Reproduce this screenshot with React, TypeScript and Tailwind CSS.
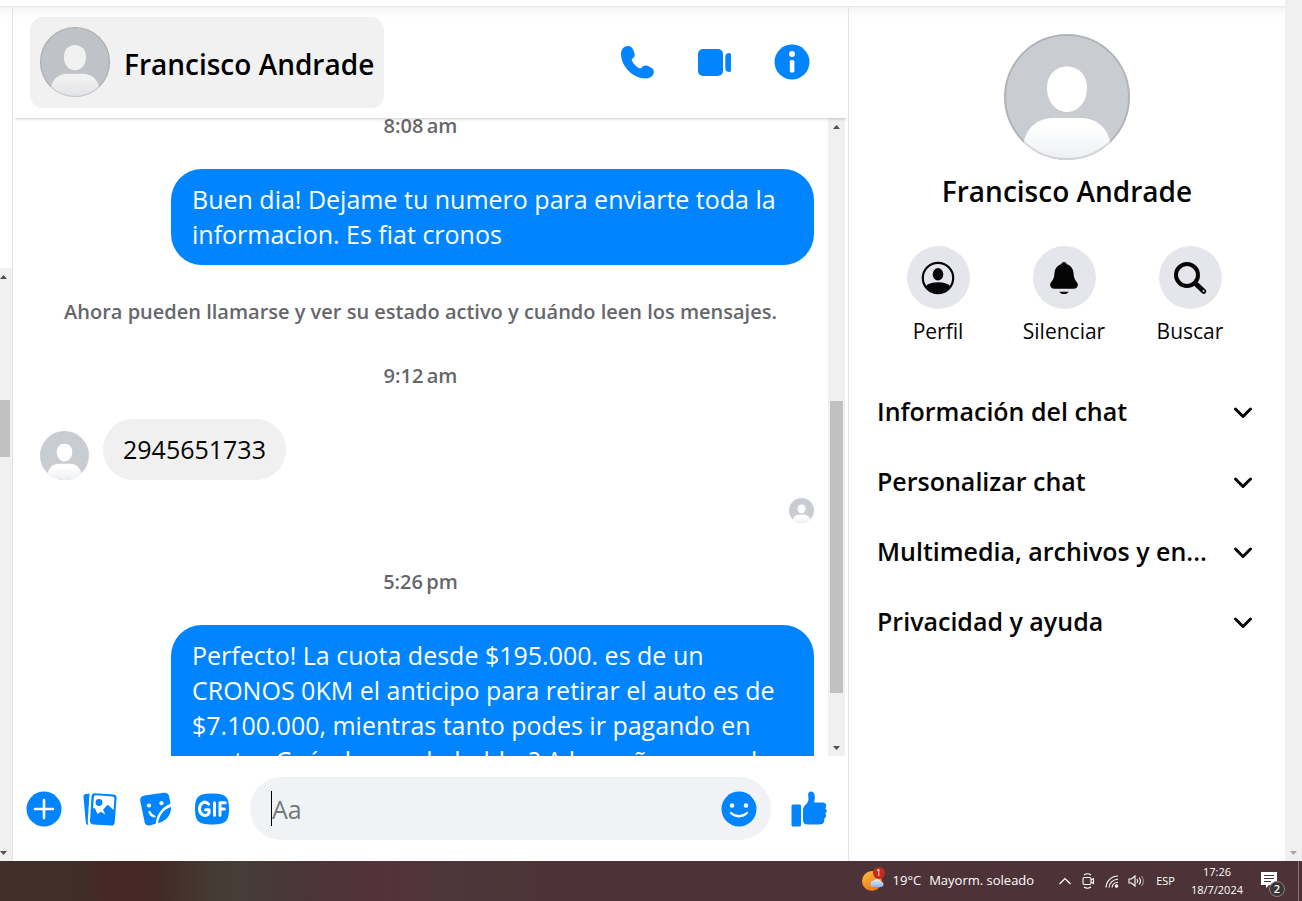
import React from 'react';

interface IconProps {
  className?: string;
}

const PhoneIcon: React.FC<IconProps> = ({ className }) => (
  <svg viewBox="0 0 36 36" className={className} fill="currentColor" aria-hidden="true">
    <path d="M1 10C1 5.500 4 2 8 2c3 0 4.500 1.800 5.500 4.500l1 2.700c.7 2 .1 3.900-1.700 5.100-1.300.9-1.300 1.600-.6 2.900 1.800 3.200 4 5.400 7.200 7 .9.500 1.600.3 2.200-.5 1.500-2 3.400-2.800 5.700-2 1.500.5 3 1.300 4.400 2.200 2.300 1.500 2.800 4 1.500 6.600C31.700 33 29 34.500 25.500 34.500 13 34.500 1 22 1 10z" />
  </svg>
);

const VideoIcon: React.FC<IconProps> = ({ className }) => (
  <svg viewBox="0 0 36 36" className={className} fill="currentColor" aria-hidden="true">
    <rect x="1" y="5" width="25" height="27" rx="5" />
    <path d="M28.300 12.500c0-2 1.800-3.500 3.900-3.500 1.100 0 1.800.6 1.800 1.800v15.400c0 1.200-.7 1.800-1.800 1.800-2.100 0-3.900-1.500-3.900-3.500z" />
  </svg>
);

const InfoIcon: React.FC<IconProps> = ({ className }) => (
  <svg viewBox="0 0 36 36" className={className} aria-hidden="true">
    <circle cx="18" cy="18" r="17.500" fill="currentColor" />
    <circle cx="18" cy="10" r="3" fill="#fff" />
    <rect x="15.800" y="16" width="4.600" height="12.500" rx="1.500" fill="#fff" />
  </svg>
);

const PlusIcon: React.FC<IconProps> = ({ className }) => (
  <svg viewBox="0 0 36 36" className={className} aria-hidden="true">
    <circle cx="18" cy="18" r="17.500" fill="currentColor" />
    <path d="M18 9v18M9 18h18" stroke="#fff" strokeWidth="2.600" strokeLinecap="round" />
  </svg>
);

const PhotosIcon: React.FC<IconProps> = ({ className }) => (
  <svg viewBox="0 0 36 36" className={className} aria-hidden="true">
    <path d="M1.500 6C1.300 4.300 2.200 3.200 4 3l3.500-.4L5.800 30c-.1 2 .2 3 .7 3.900C4.800 33.800 4 33 3.800 31.300z" fill="currentColor" />
    <path d="M13 2.200 31.500 3.500c2.200.2 3.300 1.500 3.100 3.500L32.700 31.500c-.2 2.200-1.500 3.300-3.500 3.100l-18-1.200c-2.200-.2-3.300-1.400-3.200-3.400L9.500 5.300c.2-2.200 1.500-3.200 3.500-3.100z" fill="currentColor" />
    <path d="M14 4.300 30.300 5.500c1.500.1 2.200.9 2.100 2.200l-.8 11.300-5.800-5.200-4.700 4.600 2.200 5.200-4.600-2.900-3.200 2.200-2.700-5.900-1.800.6.8-11.400c.1-1.300.9-2 2.200-1.900z" fill="#fff" />
    <circle cx="17" cy="11.500" r="3.400" fill="currentColor" />
  </svg>
);

const StickerIcon: React.FC<IconProps> = ({ className }) => (
  <svg viewBox="0 0 36 36" className={className} aria-hidden="true">
    <path d="M6.500 4.500 25.500 1.700c3-.4 5 .8 5.600 3.600l1.400 7.500C25 15.500 19 22.500 17.600 32.700l-5 1.600c-3.300.8-5.400-.3-6-3.300L2.300 10.300c-.6-3.300.9-5.300 4.200-5.800z" fill="currentColor" />
    <path d="M33 16c.4 8-4.700 14-13 16.200C21.200 24 26 18 33 16z" fill="currentColor" />
    <circle cx="11" cy="14.500" r="2.100" fill="#fff" />
    <circle cx="23.500" cy="12.200" r="2.100" fill="#fff" />
    <path d="M11.500 21c.9 2.400 2.700 4 5 4.500" stroke="#fff" strokeWidth="2.200" strokeLinecap="round" fill="none" />
  </svg>
);

const GifIcon: React.FC<IconProps> = ({ className }) => (
  <svg viewBox="0 0 36 36" className={className} aria-hidden="true">
    <path d="M18 2.500c13 0 17 3 17 15.500s-4 15.500-17 15.500S1 30.500 1 18 5 2.500 18 2.500z" fill="currentColor" />
    <g fill="none" stroke="#fff" strokeWidth="3" strokeLinecap="round" strokeLinejoin="round">
      <path d="M14.500 13.200C12.800 11 10.500 10.600 8.300 12c-3.600 2.400-3.800 9 0 11.600 2.600 1.700 5.600.9 6.800-1.700V18.700h-3.600" />
      <path d="M20.500 11.700v12.600M26 24.300V11.700h5.200M26 18h4.400" />
    </g>
  </svg>
);

const SmileIcon: React.FC<IconProps> = ({ className }) => (
  <svg viewBox="0 0 36 36" className={className} aria-hidden="true">
    <circle cx="18" cy="18" r="17.500" fill="currentColor" />
    <circle cx="11" cy="14.500" r="2.300" fill="#fff" />
    <circle cx="25" cy="14.500" r="2.300" fill="#fff" />
    <path d="M10 22c4.500 4.300 11.500 4.300 16 0" stroke="#fff" strokeWidth="2.300" strokeLinecap="round" fill="none" />
  </svg>
);

const LikeIcon: React.FC<IconProps> = ({ className }) => (
  <svg viewBox="0 0 36 36" className={className} fill="currentColor" aria-hidden="true">
    <rect x="0.500" y="13.500" width="9.500" height="22" rx="1.500" />
    <path d="M12 19c0-2.500 1-3.800 2.800-5.500 2.400-2.300 3.200-4 2.400-8.500C16.700 2 18 .5 20 .5c3 0 4 3 3.800 6.500-.1 1.800-.6 3-.6 4.500h8.300c2.500 0 3.700 1.300 3.700 3.200 0 1.200-.5 2-1.200 2.600 1.200.6 1.800 1.600 1.700 2.900-.1 1.200-.7 2-1.600 2.500.8.6 1.100 1.500.9 2.600-.2 1.300-.9 2-1.900 2.400.3.600.4 1.400.2 2.200-.5 2.200-2 3.600-5.500 3.600H17c-3.300 0-5-1.500-5-4.500z" />
  </svg>
);

const ProfileIcon: React.FC<IconProps> = ({ className }) => (
  <svg viewBox="0 0 36 36" className={className} aria-hidden="true">
    <circle cx="18" cy="18" r="15.200" fill="none" stroke="currentColor" strokeWidth="2.200" />
    <ellipse cx="18" cy="14.300" rx="5.300" ry="6.200" fill="currentColor" />
    <path d="M5.500 26.500C8 23.500 12.500 22.300 18 22.300s10 1.200 12.500 4.200C28 31 23.500 33.500 18 33.500S8 31 5.500 26.500z" fill="currentColor" />
  </svg>
);

const BellIcon: React.FC<IconProps> = ({ className }) => (
  <svg viewBox="0 0 36 36" className={className} fill="currentColor" aria-hidden="true">
    <path d="M18 2c1.600 0 2.500 1 2.800 2.300 4 1.300 6.400 4.400 6.700 8.700.3 4.300 1 6.300 3 8.700 1.200 1.400 1.600 2.500 1.200 4.100-.5 2-1.800 3-4 3H8.300c-2.200 0-3.500-1-4-3-.4-1.600 0-2.700 1.200-4.100 2-2.400 2.700-4.400 3-8.700.3-4.300 2.700-7.400 6.700-8.700C15.500 3 16.400 2 18 2z" />
    <path d="M13.300 31.700h9.400c-.8 1.500-2.600 2.300-4.700 2.300s-3.900-.8-4.700-2.300z" />
  </svg>
);

const SearchIcon: React.FC<IconProps> = ({ className }) => (
  <svg viewBox="0 0 36 36" className={className} fill="none" stroke="currentColor" aria-hidden="true">
    <circle cx="15" cy="15" r="11" strokeWidth="4" />
    <path d="M24 24l7.800 7.300" strokeWidth="5" strokeLinecap="round" />
    <circle cx="31.500" cy="31" r=".7" stroke="#e4e6eb" strokeWidth="1" />
  </svg>
);

const ChevronIcon: React.FC<IconProps> = ({ className }) => (
  <svg viewBox="0 0 20 20" className={className} fill="none" aria-hidden="true">
    <path d="M2.500 7 10 14.500 17.500 7" stroke="currentColor" strokeWidth="3" strokeLinecap="round" strokeLinejoin="round" />
  </svg>
);

const WeatherIcon: React.FC<IconProps> = ({ className }) => (
  <svg viewBox="0 0 24 24" className={className} aria-hidden="true">
    <defs>
      <linearGradient id="sun" x1="0" y1="0" x2="0.600" y2="1">
        <stop offset="0" stopColor="#f9c440" />
        <stop offset="1" stopColor="#ee7414" />
      </linearGradient>
      <linearGradient id="cloud" x1="0" y1="0" x2="0" y2="1">
        <stop offset="0" stopColor="#e6f0fd" />
        <stop offset="1" stopColor="#8db4ee" />
      </linearGradient>
    </defs>
    <circle cx="11" cy="12" r="10" fill="url(#sun)" />
    <path d="M12 18a3.200 3.200 0 0 1 .5-6.300 4.500 4.500 0 0 1 7.500.8 2.800 2.800 0 0 1 .5 5.500z" fill="url(#cloud)" />
  </svg>
);

const Avatar: React.FC<{ id: string; className: string; ring?: boolean; muted?: boolean }> = ({
  id,
  className,
  ring,
  muted
}) => (
  <svg viewBox="0 0 126 126" className={className} role="img" aria-label="Foto de perfil">
    <defs>
      <clipPath id={`${id}-clip`}>
        <circle cx="63" cy="63" r="63" />
      </clipPath>
      <linearGradient id={`${id}-body`} x1="0" y1="0" x2="0" y2="1">
        <stop offset="0.200" stopColor={muted ? '#f1f1f1' : '#ffffff'} />
        <stop offset="1" stopColor={muted ? '#e0e2e5' : '#eceef2'} />
      </linearGradient>
    </defs>
    <g clipPath={`url(#${id}-clip)`}>
      <rect width="126" height="126" fill={muted ? '#bfc2c7' : '#c9ccd1'} />
      <path d="M63 32.500c12 0 20 9 20 21.500 0 14-9 24-20 24s-20-10-20-24c0-12.500 8-21.500 20-21.500z" fill={muted ? '#f1f1f1' : '#fff'} />
      <path d="M19 114c1-18 13-30 30-30h28c17 0 29 12 30 30v14H19z" fill={`url(#${id}-body)`} />
    </g>
    {ring && <circle cx="63" cy="63" r="62" fill="none" stroke="#000" strokeOpacity="0.120" strokeWidth="2" />}
  </svg>
);

const Arrow: React.FC<{ up?: boolean; className?: string }> = ({ up, className = 'text-[#505050]' }) => (
  <span className={`flex h-[17px] shrink-0 items-center justify-center ${className}`}>
    <svg viewBox="0 0 7 4" className="h-1 w-[7px]" fill="currentColor" aria-hidden="true">
      <path d={up ? 'M0 4 3.500 0 7 4z' : 'M0 0h7L3.500 4z'} />
    </svg>
  </span>
);

const Notice: React.FC<{ children: React.ReactNode }> = ({ children }) => (
  <p className="text-center text-[20px] leading-7 font-semibold text-[#65676b]">{children}</p>
);

const Outgoing: React.FC<{ children: React.ReactNode }> = ({ children }) => (
  <div className="mt-[29px] w-[643px] shrink-0 self-end rounded-[31px] bg-[#0084ff] px-[21px] py-[13px] text-[25px] leading-[35px] text-white">
    {children}
  </div>
);

const actions = [
  { label: 'Perfil', icon: ProfileIcon },
  { label: 'Silenciar', icon: BellIcon },
  { label: 'Buscar', icon: SearchIcon }
];

const sections = ['Información del chat', 'Personalizar chat', 'Multimedia, archivos y en...', 'Privacidad y ayuda'];

const ListRail = () => (
  <div className="flex w-[13px] shrink-0 flex-col border-r border-[#e4e4e4]">
    <div className="h-[262px] shrink-0" />
    <div className="flex flex-1 flex-col bg-[#f0f0f0]">
      <Arrow up className="w-[7px] text-[#505050]" />
      <div className="grow-[115]" />
      <div className="w-[10px] grow-[57] bg-[#c1c1c1]" />
      <div className="grow-[387]" />
      <Arrow className="w-[7px] text-[#505050]" />
    </div>
  </div>
);

const ChatHeader = () => (
  <header className="z-10 flex h-28 shrink-0 items-center justify-between pr-[38px] pl-[17px] shadow-[0_3px_3px_-2px_rgba(0,0,0,0.2)]">
    <button className="flex h-[91px] items-center gap-[14px] rounded-[13px] bg-[#f1f1f1] px-[10px]">
      <Avatar id="head" className="size-[70px]" ring muted />
      <span className="pt-1 text-[28px] font-semibold whitespace-nowrap text-black">Francisco Andrade</span>
    </button>
    <div className="flex items-center gap-[41px] text-[#0084ff]">
      <button aria-label="Llamar"><PhoneIcon className="size-9" /></button>
      <button aria-label="Videollamada"><VideoIcon className="size-9" /></button>
      <button aria-label="Información"><InfoIcon className="size-9" /></button>
    </div>
  </header>
);

const Messages = () => (
  <div className="flex min-h-0 flex-1 pr-[3px]">
    <div className="flex min-w-0 flex-1 flex-col overflow-hidden">
      <div className="-mt-1.5 flex flex-col px-[14px]">
        <Notice>8:08{'\u2009'}am</Notice>
        <Outgoing>Buen dia! Dejame tu numero para enviarte toda la informacion. Es fiat cronos</Outgoing>
        <div className="mt-[33px]">
          <Notice>Ahora pueden llamarse y ver su estado activo y cuándo leen los mensajes.</Notice>
        </div>
        <div className="mt-9">
          <Notice>9:12{'\u2009'}am</Notice>
        </div>
        <div className="mt-[29px] flex items-end gap-[14px] pl-[13px]">
          <Avatar id="msg" className="size-[49px]" />
          <div className="rounded-[31px] bg-[#f0f0f0] px-5 py-[13px] text-[25px] leading-[35px] text-[#050505]">
            2945651733
          </div>
        </div>
        <Avatar id="seen" className="mt-[18px] size-[25px] self-end" />
        <div className="mt-[45px]">
          <Notice>5:26{'\u2009'}pm</Notice>
        </div>
        <Outgoing>
          Perfecto! La cuota desde $195.000. es de un<br />
          CRONOS 0KM el anticipo para retirar el auto es de<br />
          $7.100.000, mientras tanto podes ir pagando en<br />
          cuotas Cuándo puedo hablar? A la mañana puedo
        </Outgoing>
      </div>
    </div>
    <div className="flex w-[17px] shrink-0 flex-col bg-[#f0f0f0]">
      <Arrow up />
      <div className="grow-[266]" />
      <div className="mx-[2px] grow-[292] bg-[#c1c1c1]" />
      <div className="grow-[46]" />
      <Arrow />
    </div>
  </div>
);

const Composer = () => (
  <footer className="flex h-[105px] shrink-0 items-center gap-5 pr-[21px] pl-[13px] text-[#0084ff]">
    <div className="flex items-center gap-5">
      <button aria-label="Más acciones"><PlusIcon className="size-9" /></button>
      <button aria-label="Adjuntar foto"><PhotosIcon className="size-9" /></button>
      <button aria-label="Sticker"><StickerIcon className="size-9" /></button>
      <button aria-label="GIF"><GifIcon className="size-9" /></button>
    </div>
    <div className="flex h-[63px] flex-1 items-center rounded-full bg-[#f0f2f5] pr-[14px] pl-[21px]">
      <span className="h-[35px] w-px bg-black" />
      <input
        aria-label="Mensaje"
        placeholder="Aa"
        className="min-w-0 flex-1 bg-transparent pt-0.5 text-[25px] text-black outline-none placeholder:text-[#75777b]"
      />
      <button aria-label="Emoji"><SmileIcon className="size-9" /></button>
    </div>
    <button aria-label="Me gusta"><LikeIcon className="size-9" /></button>
  </footer>
);

const SidePanel = () => (
  <aside className="flex w-[437px] shrink-0 flex-col border-l border-[#e4e4e4] pt-7">
    <Avatar id="side" className="size-[126px] self-center" ring />
    <h2 className="mt-[11px] text-center text-[28px] leading-10 font-semibold text-[#050505]">Francisco Andrade</h2>
    <div className="mt-[35px] grid grid-cols-3 pr-8 pl-[26px]">
      {actions.map(({ label, icon: Icon }) => (
        <button key={label} className="flex flex-col items-center gap-2 text-[#050505]">
          <span className="flex size-[63px] items-center justify-center rounded-full bg-[#e4e6eb]">
            <Icon className="size-9" />
          </span>
          <span className="text-[21px] leading-7">{label}</span>
        </button>
      ))}
    </div>
    <div className="mt-8 flex flex-col pr-8 pl-7">
      {sections.map((title) => (
        <button key={title} className="flex h-[70px] items-center justify-between text-[#050505]">
          <span className="text-[25px] font-semibold whitespace-nowrap">{title}</span>
          <ChevronIcon className="size-5" />
        </button>
      ))}
    </div>
  </aside>
);

const Taskbar = () => (
  <div className="flex h-10 shrink-0 items-center justify-end bg-[#4d3337] bg-[linear-gradient(90deg,#41302a_0px,#3f2f28_70px,#482624_120px,#432a25_160px,#443a32_205px,#463d39_240px,#4a3538_300px,#54323a_385px,#4d373a_440px,#4d3337_560px)] text-[13px] text-white">
    <button className="flex items-center gap-2">
      <span className="relative">
        <WeatherIcon className="size-6" />
        <span className="absolute -top-0.5 right-0 flex size-3 items-center justify-center rounded-full bg-[#c42b1c] text-[9px] leading-3">
          1
        </span>
      </span>
      <span>19°C</span>
      <span className="whitespace-nowrap">Mayorm. soleado</span>
    </button>
    <div className="ml-6 flex items-center gap-2">
      <svg viewBox="0 0 14 14" className="size-[14px]" fill="none" stroke="#fff" strokeWidth="1.200" aria-hidden="true">
        <path d="M1.500 10 7 4.500l5.500 5.500" />
      </svg>
      <svg viewBox="0 0 16 16" className="size-4" fill="none" stroke="#fff" strokeWidth="1.100" aria-hidden="true">
        <rect x="3" y="4.500" width="8" height="7" rx="1.500" />
        <path d="M11 7l2.500-1.500v5L11 9M4 2Q7.500-.5 11 2M4 14q3.500 2.500 7 0" />
      </svg>
      <svg viewBox="0 0 16 16" className="size-4" fill="none" stroke="#fff" strokeWidth="1.100" aria-hidden="true">
        <path d="M2 14.500A12 12 0 0 1 14 3M5 14.500A9 9 0 0 1 14 6.200M8 14.500a6 6 0 0 1 6-5.200" />
        <circle cx="12.500" cy="13" r="1.200" fill="#fff" />
      </svg>
      <svg viewBox="0 0 18 16" className="h-4 w-[18px]" fill="none" stroke="#fff" strokeWidth="1.100" aria-hidden="true">
        <path d="M1 6h2.500L7 3v10L3.500 10H1zM9 6q1.500 2 0 4M11.200 4.500q2.600 3.500 0 7" />
        <path d="M13.500 3q4 5 0 10" strokeOpacity="0.450" />
      </svg>
    </div>
    <span className="ml-[10px] text-[11px]">ESP</span>
    <div className="ml-4 text-center text-[11px] leading-[18px]">
      <div>17:26</div>
      <div>18/7/2024</div>
    </div>
    <button className="relative mr-[14px] ml-[17px]" aria-label="Notificaciones">
      <svg viewBox="0 0 24 24" className="size-6" aria-hidden="true">
        <path d="M1 3h16v13H9l-3 3v-3H1z" fill="#fff" />
        <path d="M4 6.500h10M4 9.500h10M4 12.500h7" stroke="#4d3337" strokeWidth="1.200" />
      </svg>
      <span className="absolute -right-px -bottom-1 flex size-4 items-center justify-center rounded-full border border-[#8a8586] bg-[#3b3536] text-[11px] leading-4 font-semibold">
        2
      </span>
    </button>
    <span className="h-full w-1 border-l border-[#8b7376]" />
  </div>
);

const App: React.FC = () => {
  return (
    <div className="flex h-screen flex-col overflow-hidden bg-white font-['Open_Sans','Noto_Sans',sans-serif]">
      <div className="flex min-h-0 flex-1">
        <div className="flex min-w-0 flex-1 flex-col">
          <div className="h-1.5 shrink-0 bg-white" />
          <div className="flex min-h-0 flex-1 bg-[linear-gradient(180deg,#e6e6e6_0px,#f6f6f6_2px,#ffffff_12px)]">
            <ListRail />
            <main className="flex min-w-0 flex-1 flex-col">
              <ChatHeader />
              <Messages />
              <Composer />
            </main>
            <SidePanel />
          </div>
        </div>
        <div className="flex w-[17px] shrink-0 flex-col justify-end bg-[#f0f0f0]">
          <Arrow className="text-[#a3a3a3]" />
        </div>
      </div>
      <Taskbar />
    </div>
  );
};

export default App;
